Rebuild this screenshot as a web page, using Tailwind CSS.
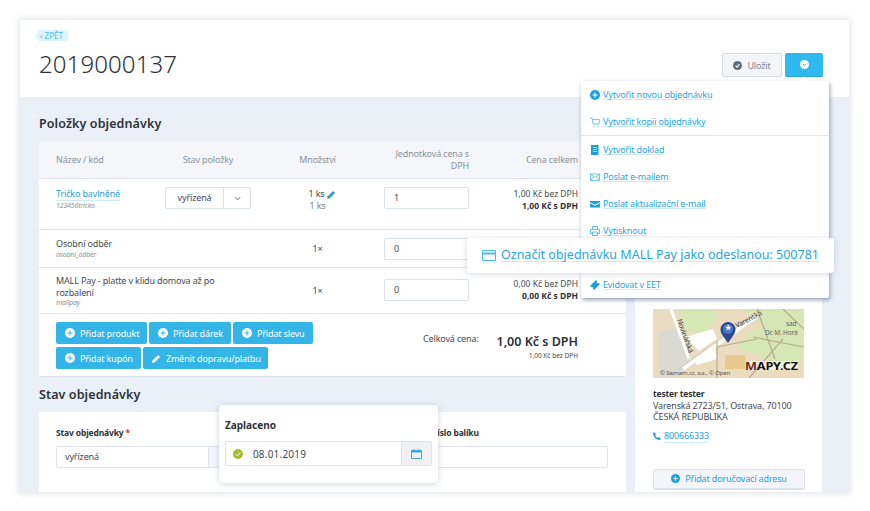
<!DOCTYPE html>
<html lang="cs">
<head>
<meta charset="UTF-8">
<title>Objednávka 2019000137</title>
<script src="https://cdn.jsdelivr.net/npm/@tailwindcss/browser@4"></script>
</head>
<body class="bg-white font-['Noto_Sans',sans-serif] text-[#444b55] text-[9px] tracking-[-0.15px] leading-none">
<div class="relative w-[870px] h-[511px] overflow-hidden pt-[20px] pl-[20px]">

  <!-- page card -->
  <div class="w-[829px] h-[472px] bg-[#ebeff6] overflow-hidden shadow-[0_0_4px_3px_rgba(190,195,200,0.3)] rounded-[2px]">
    <!-- header -->
    <div class="h-[77px] bg-white relative pl-[16px] pt-[10px]">
      <a class="block w-[32px] h-[11px] bg-[#dff3fc] rounded-[2px] text-[#4dbcec] text-[8px] leading-[11px] pl-[4px] tracking-[0px] [clip-path:polygon(3px_0,100%_0,100%_100%,3px_100%,0_50%)]">‹ ZPĚT</a>
      <h1 class="ml-[3px] mt-[8px] text-[24px] leading-[30px] font-light text-[#2c323a] tracking-[0.1px]">2019000137</h1>
      <div class="absolute top-[33px] left-[702px] flex gap-[3px]">
        <button class="w-[60px] h-[24px] bg-[#f3f5f9] border border-[#d5dbe4] rounded-[2px] flex items-center justify-center gap-[5px] text-[#7f8792] text-[9px]">
          <svg class="w-[9px] h-[9px]" viewBox="0 0 10 10"><circle cx="5" cy="5" r="5" fill="#5e6a80"/><path d="M2.8 5.2 4.4 6.8 7.3 3.4" fill="none" stroke="#fff" stroke-width="1.2"/></svg>
          Uložit
        </button>
        <button class="w-[38px] h-[24px] bg-[#2fb8ef] rounded-[2px] border-b border-[#20a5dc] flex items-center justify-center">
          <svg class="w-[9px] h-[9px]" viewBox="0 0 10 10"><circle cx="5" cy="5" r="5" fill="#fff"/><path d="M3 4.2 5 6 7 4.2" fill="none" stroke="#2fb8ef" stroke-width="1"/></svg>
        </button>
      </div>
    </div>

    <!-- body -->
    <div class="flex pl-[19px] gap-[9px]">
      <div class="w-[587px] shrink-0">
        <h2 class="pt-[19px] h-[44px] text-[12.5px] leading-[16px] font-semibold text-[#2c323a] tracking-[0.1px]">Položky objednávky</h2>

        <div class="bg-white border-b border-[#dfe4ec] rounded-[2px] h-[236px]">
          <!-- table head -->
          <div class="grid grid-cols-[109px_86px_133px_85px_109px] pl-[17px] h-[38px] items-center bg-[#f4f6fa] border-b border-[#dfe4ec] text-[#8a919b] text-[9px] leading-[12px]">
            <div>Název / kód</div>
            <div class="text-center">Stav položky</div>
            <div class="text-center">Množství</div>
            <div class="text-right">Jednotková cena s<br>DPH</div>
            <div class="text-right">Cena celkem</div>
          </div>
          <!-- row 1 -->
          <div class="grid grid-cols-[109px_86px_133px_85px_109px] pl-[17px] h-[51px] pt-[8px] border-b border-[#dfe4ec] leading-[12px]">
            <div class="pt-[1px]">
              <a class="text-[#2a9fd6] border-b border-[#cdeaf7]">Tričko bavlněné</a>
              <div class="italic text-[#8a919b] text-[7px] leading-[10px] mt-[1px]">123456tricko</div>
            </div>
            <div class="h-[22px] flex border border-[#d9e0e9] rounded-[2px] items-center">
              <span class="w-[58px] text-center border-r border-[#d9e0e9] leading-[20px]">vyřízená</span>
              <svg class="w-[7px] h-[5px] ml-[10px]" viewBox="0 0 8 5"><path d="M1 1 4 4 7 1" fill="none" stroke="#555" stroke-width="1"/></svg>
            </div>
            <div class="text-center pt-[1px]">
              <div class="flex items-center justify-center gap-[2px] pl-[9px]"><span>1 ks</span>
                <svg class="w-[9px] h-[9px]" viewBox="0 0 8 8"><path d="M0 8 .6 5.6 5.4.8 7.2 2.6 2.4 7.4Z" fill="#2a9fd6"/></svg>
              </div>
              <div class="text-[#7a818b]">1 ks</div>
            </div>
            <div class="h-[22px] border border-[#d9e0e9] rounded-[2px] pl-[9px] leading-[20px]">1</div>
            <div class="text-right text-[8.5px] tracking-[0px] leading-[11.5px] pt-[1px]">
              <div>1,00 Kč bez DPH</div>
              <div class="font-bold text-[#2c323a]">1,00 Kč s DPH</div>
            </div>
          </div>
          <!-- row 2 -->
          <div class="grid grid-cols-[109px_86px_133px_85px_109px] pl-[17px] h-[38px] pt-[8px] border-b border-[#dfe4ec] leading-[12px]">
            <div class="col-span-2">
              <div>Osobní odběr</div>
              <div class="italic text-[#8a919b] text-[7px] leading-[9px]">osobni_odber</div>
            </div>
            <div class="text-center pt-[5px]">1×</div>
            <div class="h-[22px] border border-[#d9e0e9] rounded-[2px] pl-[9px] leading-[20px]">0</div>
          </div>
          <!-- row 3 -->
          <div class="grid grid-cols-[109px_86px_133px_85px_109px] pl-[17px] h-[46px] pt-[7px] border-b border-[#dfe4ec] leading-[12px]">
            <div class="col-span-2 w-[175px]">
              <div class="leading-[11.5px]">MALL Pay - plaťte v klidu domova až po<br>rozbalení</div>
              <div class="italic text-[#8a919b] text-[7px] leading-[10px]">mallpay</div>
            </div>
            <div class="text-center pt-[10px]">1×</div>
            <div class="h-[22px] mt-[4px] border border-[#d9e0e9] rounded-[2px] pl-[9px] leading-[20px]">0</div>
            <div class="text-right text-[8.5px] tracking-[0px] leading-[11.5px] pt-[3px]">
              <div>0,00 Kč bez DPH</div>
              <div class="font-bold text-[#2c323a]">0,00 Kč s DPH</div>
            </div>
          </div>
          <!-- add buttons and total -->
          <div class="flex pl-[17px] pt-[8px]">
            <div class="w-[262px] flex flex-wrap gap-x-[2px] gap-y-[3px] text-white whitespace-nowrap">
              <a class="w-[91px] h-[22px] bg-[#33b5e7] rounded-[2px] flex items-center pl-[9px] gap-[5px]"><svg class="w-[10px] h-[10px]" viewBox="0 0 10 10"><circle cx="5" cy="5" r="5" fill="#fff"/><path d="M2.5 5h5M5 2.5v5" stroke="#33b5e7"/></svg>Přidat produkt</a>
              <a class="w-[82px] h-[22px] bg-[#33b5e7] rounded-[2px] flex items-center pl-[9px] gap-[5px]"><svg class="w-[10px] h-[10px]" viewBox="0 0 10 10"><circle cx="5" cy="5" r="5" fill="#fff"/><path d="M2.5 5h5M5 2.5v5" stroke="#33b5e7"/></svg>Přidat dárek</a>
              <a class="w-[80px] h-[22px] bg-[#33b5e7] rounded-[2px] flex items-center pl-[9px] gap-[5px]"><svg class="w-[10px] h-[10px]" viewBox="0 0 10 10"><circle cx="5" cy="5" r="5" fill="#fff"/><path d="M2.5 5h5M5 2.5v5" stroke="#33b5e7"/></svg>Přidat slevu</a>
              <a class="w-[85px] h-[22px] bg-[#33b5e7] rounded-[2px] flex items-center pl-[9px] gap-[5px]"><svg class="w-[10px] h-[10px]" viewBox="0 0 10 10"><circle cx="5" cy="5" r="5" fill="#fff"/><path d="M2.5 5h5M5 2.5v5" stroke="#33b5e7"/></svg>Přidat kupón</a>
              <a class="w-[125px] h-[22px] bg-[#33b5e7] rounded-[2px] flex items-center pl-[9px] gap-[5px]"><svg class="w-[9px] h-[9px]" viewBox="0 0 8 8"><path d="M0 8 .6 5.6 5.4.8 7.2 2.6 2.4 7.4Z" fill="#fff"/></svg>Změnit dopravu/platbu</a>
            </div>
            <div class="ml-[105px] w-[55px] pt-[12px] text-[9px] whitespace-nowrap">Celková cena:</div>
            <div class="w-[100px] text-right pt-[12px]">
              <div class="font-semibold text-[12.5px] tracking-[0px] leading-[15px] text-[#2c323a]">1,00 Kč s DPH</div>
              <div class="text-[6.5px] tracking-[0px] leading-[10px] mt-[2px]">1,00 Kč bez DPH</div>
            </div>
          </div>
        </div>

        <h2 class="pt-[10px] h-[35px] text-[12.5px] leading-[16px] font-semibold text-[#2c323a] tracking-[0.1px]">Stav objednávky</h2>
        <div class="bg-white h-[90px] rounded-[2px] pl-[17px] pt-[15px] flex">
          <div class="w-[376px]">
            <div class="font-bold text-[#2c323a] text-[8.5px] leading-[11px] mb-[8px]">Stav objednávky <span class="text-[#c0392b]">*</span></div>
            <div class="w-[200px] h-[22px] border border-[#dfe4ec] rounded-[2px] flex leading-[20px]">
              <span class="w-[152px] pl-[8px] border-r border-[#dfe4ec]">vyřízená</span>
              <span class="flex-1 bg-[#f4f6fa]"></span>
            </div>
          </div>
          <div>
            <div class="font-bold text-[#2c323a] text-[8.5px] leading-[11px] mb-[8px]">Číslo balíku</div>
            <div class="w-[176px] h-[22px] border border-[#dfe4ec] rounded-[2px]"></div>
          </div>
        </div>
      </div>

      <!-- right column -->
      <div class="w-[187px] h-[395px] mt-[44px] bg-white pl-[18px] pt-[168px]">
        <svg class="w-[151px] h-[69px] block" viewBox="0 0 151 69">
          <rect width="151" height="69" fill="#ebdcbf"/>
          <path d="M88 0H151V50L128 58 100 44 84 40 92 28 110 16Z" fill="#d6e6b4"/>
          <path d="M26 0H62V14L52 22 32 24Z" fill="#d6e6b4"/>
          <path d="M4 24 26 18 38 50 30 66 6 69Z" fill="#dadad2"/>
          <path d="M32 28 60 20 64 30 46 42Z" fill="#fff"/>
          <path d="M40 50 62 38 64 50 44 56Z" fill="#fff"/>
          <path d="M30 60 108 4" stroke="#fff" stroke-width="4" fill="none"/>
          <path d="M26 60 104 2" stroke="#c9bfa4" stroke-width=".7" fill="none"/>
          <path d="M64 32V69M64 38 104 30M100 28 151 38M104 0 122 50M130 0 151 20M96 69 130 30" stroke="#b9ab8c" stroke-width="1.2" fill="none"/>
          <path d="M18 0 36 50" stroke="#fff" stroke-width="3" fill="none"/>
          <path d="M72 46H92V60H72Z" fill="#e5c98f"/>
          <text x="0" y="0" transform="translate(24 11) rotate(70)" font-size="7" fill="#333">Novinářská</text>
          <text x="0" y="0" transform="translate(84 19) rotate(-28)" font-size="7" fill="#333">Varenská</text>
          <text x="133" y="17" font-size="6.5" fill="#666">sad</text>
          <text x="112" y="26" font-size="6.5" fill="#666">Dr. M. Horá</text>
          <rect x="94" y="52" width="51" height="9" fill="#fff" opacity=".55"/>
          <text x="92" y="61" font-size="11" font-weight="700" fill="#111" textLength="53" lengthAdjust="spacingAndGlyphs"><tspan fill="#6b2a15">M</tspan>APY.CZ</text>
          <text x="7" y="66" font-size="6" fill="#555">© Seznam.cz, a.s., © Open</text>
          <path d="M75 34C70 27 67.5 24 67.5 20.5A7.5 7.5 0 0 1 82.5 20.5C82.5 24 80 27 75 34Z" fill="#2d4a90"/>
          <circle cx="75" cy="20" r="5" fill="#4f78c8"/>
          <text x="72.5" y="24" font-size="10" font-weight="700" fill="#fff">*</text>
        </svg>
        <div class="mt-[10px] leading-[11.7px]">
          <div class="font-bold text-[#2c323a] text-[8.5px]">tester tester</div>
          <div>Varenská 2723/51, Ostrava, 70100</div>
          <div>ČESKÁ REPUBLIKA</div>
          <div class="flex items-center gap-[3px] mt-[7px] text-[#2a9fd6]">
            <svg class="w-[8px] h-[8px]" viewBox="0 0 8 8"><path d="M1 0 3 2 2.2 3.4C2.8 4.6 3.6 5.4 4.8 5.8L6 5 8 7 6.8 8C3 8 0 4.5 0 1Z" fill="#2a9fd6"/></svg>
            <span class="border-b border-[#cdeaf7]">800666333</span>
          </div>
        </div>
        <a class="mt-[26px] w-[152px] h-[21px] bg-[#f3f5f9] border border-b-2 border-[#dde2ea] rounded-[2px] flex items-center justify-center gap-[5px] text-[#2a9fd6]">
          <svg class="w-[9px] h-[9px]" viewBox="0 0 10 10"><circle cx="5" cy="5" r="5" fill="#1e9fd8"/><path d="M2.5 5h5M5 2.5v5" stroke="#fff"/></svg>
          Přidat doručovací adresu
        </a>
      </div>
    </div>
  </div>

  <!-- dropdown menu -->
  <div class="absolute left-[581px] top-[81px] w-[248px] h-[217px] bg-white shadow-[1px_2px_4px_rgba(70,90,120,0.55)] rounded-[2px] text-[#1fa6e0] pl-[9px]">
    <div class="absolute left-[219px] -top-[3px] w-[8px] h-[8px] bg-white rotate-45"></div>
    <a class="relative h-[27px] flex items-center gap-[3px]"><svg class="w-[10px] h-[10px]" viewBox="0 0 10 10"><circle cx="5" cy="5" r="5" fill="#1e9fd8"/><path d="M2.5 5h5M5 2.5v5" stroke="#fff"/></svg><span class="border-b border-[#cdeaf7]">Vytvořit novou objednávku</span></a>
    <a class="h-[27px] flex items-center gap-[3px]"><svg class="w-[10px] h-[10px]" viewBox="0 0 10 10"><path d="M0 1H2L3 7H9L9.5 2.5H2.4M3.5 9.5h1M7.5 9.5h1" fill="none" stroke="#4db9e8" stroke-width=".8"/></svg><span class="border-b border-[#cdeaf7]">Vytvořit kopii objednávky</span></a>
    <div class="-ml-[9px] h-px bg-[#dfe4ec]"></div>
    <a class="h-[27px] flex items-center gap-[3px]"><svg class="w-[10px] h-[10px]" viewBox="0 0 10 10"><path d="M1 0H8.5V10H1Z" fill="#1e9fd8"/><path d="M3 2.5H7M3 4.5H7M3 6.5H7" stroke="#fff" stroke-width=".6"/></svg><span class="border-b border-[#cdeaf7]">Vytvořit doklad</span></a>
    <a class="h-[27px] flex items-center gap-[3px]"><svg class="w-[10px] h-[10px]" viewBox="0 0 10 10"><path d="M.5 2H9.5V8.5H.5ZM.5 2 5 5.5 9.5 2M.5 8.5 3.5 4.5M9.5 8.5 6.5 4.5" fill="none" stroke="#4db9e8" stroke-width=".8"/></svg><span class="border-b border-[#cdeaf7]">Poslat e-mailem</span></a>
    <a class="h-[27px] flex items-center gap-[3px]"><svg class="w-[10px] h-[10px]" viewBox="0 0 10 10"><path d="M0 2H10V3.2L5 5.8 0 3.2ZM0 4.2 5 6.8 10 4.2V8.5H0Z" fill="#1e9fd8"/></svg><span class="border-b border-[#cdeaf7]">Poslat aktualizační e-mail</span></a>
    <a class="h-[27px] flex items-center gap-[3px]"><svg class="w-[10px] h-[10px]" viewBox="0 0 10 10"><path d="M2.5 3V.5H7.5V3M2.5 7.5H.5V3.5H9.5V7.5H7.5M2.5 6H7.5V9.5H2.5Z" fill="none" stroke="#4db9e8" stroke-width=".9"/></svg><span class="border-b border-[#cdeaf7]">Vytisknout</span></a>
    <div class="h-[27px]"></div>
    <a class="h-[27px] flex items-center gap-[3px]"><svg class="w-[10px] h-[10px]" viewBox="0 0 10 10"><path d="M0 6 6 0 7 1.2A1 1 0 0 0 8.8 3L10 4 4 10 2.8 8.8A1 1 0 0 0 1.2 7.2Z" fill="#1e9fd8"/></svg><span class="border-b border-[#cdeaf7]">Evidovat v EET</span></a>
  </div>

  <!-- MALL Pay tooltip -->
  <div class="absolute left-[467px] top-[238px] w-[367px] h-[35px] bg-white rounded-[3px] shadow-[0_1px_6px_rgba(120,130,150,0.3)] flex items-center pl-[15px] gap-[5px] text-[#2aa5de] text-[12.5px] tracking-[0px]">
    <svg class="w-[14px] h-[11px]" viewBox="0 0 14 11"><path d="M.5.5H13.5V10.5H.5Z" fill="none" stroke="#4db9e8"/><path d="M.5 2.5H13.5V4.5H.5Z" fill="#4db9e8"/></svg>
    <span class="border-b border-[#cdeaf7] whitespace-nowrap">Označit objednávku MALL Pay jako odeslanou: 500781</span>
  </div>

  <!-- paid date popup -->
  <div class="absolute left-[219px] top-[405px] w-[219px] h-[78px] bg-white rounded-[4px] shadow-[0_1px_6px_rgba(120,130,150,0.35)] pl-[6px] pt-[14px] tracking-[0px]">
    <div class="font-bold text-[#2c323a] text-[10px] leading-[12px] mb-[10px]">Zaplaceno</div>
    <div class="w-[207px] h-[25px] border border-[#dfe4ec] rounded-[2px] flex items-center">
      <svg class="w-[10px] h-[10px] ml-[7px]" viewBox="0 0 10 10"><circle cx="5" cy="5" r="5" fill="#a3bd2d"/><path d="M2.8 5.2 4.4 6.8 7.3 3.4" fill="none" stroke="#fff" stroke-width="1"/></svg>
      <span class="ml-[10px] w-[149px] text-[10px] tracking-[0.2px]">08.01.2019</span>
      <div class="w-[30px] h-full bg-[#eff1f4] border-l border-[#dfe4ec] flex items-center justify-center">
        <svg class="w-[11px] h-[10px]" viewBox="0 0 11 10"><path d="M.5 1.5H10.5V9.5H.5Z" fill="none" stroke="#3aa6e0"/><path d="M.5 1.5H10.5V3.5H.5Z" fill="#3aa6e0"/><path d="M3 0V2M8 0V2" stroke="#3aa6e0"/></svg>
      </div>
    </div>
  </div>
</div>
</body>
</html>
